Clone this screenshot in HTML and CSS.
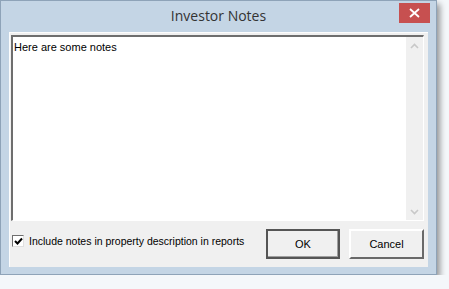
FILE: index.html
```html
<!DOCTYPE html>
<html lang="en">
<head>
    <meta charset="UTF-8">
    <title>Investor Notes</title>
    <link rel="stylesheet" href="styles.css">
</head>
<body>
<div class="window">
    <div class="titlebar">
        <div class="title">Investor Notes</div>
        <div class="close">
            <svg width="11" height="10" viewBox="0 0 11 10">
                <path d="M1 1 L10 9 M10 1 L1 9" stroke="#fff" stroke-width="1.8" fill="none"/>
            </svg>
        </div>
    </div>
    <div class="client">
        <div class="notes">
            <div class="notes-text">Here are some notes</div>
            <div class="scroll">
                <svg width="9" height="6" viewBox="0 0 9 6"><path d="M1 5 L4.5 1.5 L8 5" stroke="#c8c8c8" stroke-width="1.6" fill="none"/></svg>
                <svg width="9" height="6" viewBox="0 0 9 6"><path d="M1 1 L4.5 4.5 L8 1" stroke="#c8c8c8" stroke-width="1.6" fill="none"/></svg>
            </div>
        </div>
        <div class="footer">
            <label class="check">
                <span class="box">
                    <svg width="9" height="9" viewBox="0 0 9 9"><path d="M1 4 L3.5 6.5 L8 1.5" stroke="#000" stroke-width="2" fill="none"/></svg>
                </span>
                Include notes in property description in reports
            </label>
            <div class="buttons">
                <div class="btn btn-default">OK</div>
                <div class="btn">Cancel</div>
            </div>
        </div>
    </div>
</div>
</body>
</html>
```
FILE: styles.css
```css
html, body {
    margin: 0;
    padding: 0;
    background: #f4f7fa;
}

.window {
    width: 435px;
    height: 273px;
    border: 1px solid #8ea3b8;
    background: #c4d5e5;
    box-shadow: 3px 4px 6px rgba(0, 0, 0, 0.4);
    display: flex;
    flex-direction: column;
}

.titlebar {
    height: 31px;
    position: relative;
    display: flex;
    align-items: center;
    justify-content: center;
}

.title {
    font-family: "Open Sans", "Noto Sans", sans-serif;
    font-size: 14px;
    color: #333;
    margin-top: -2px;
}

.close {
    position: absolute;
    right: 6px;
    top: 2px;
    width: 31px;
    height: 20px;
    background: #c75050;
    display: flex;
    align-items: center;
    justify-content: center;
}

.client {
    margin: 0 8px 7px 8px;
    flex: 1;
    background: #f0f0f0;
    border-top: 1px solid #fdfdfd;
    border-left: 1px solid #fdfdfd;
    padding: 2px 4px 0 1px;
    display: flex;
    flex-direction: column;
    font-family: "Liberation Sans", Arial, sans-serif;
    font-size: 10.5px;
    color: #000;
}

.notes {
    height: 183px;
    background: #fff;
    border-top: 2px solid #6e6e6e;
    border-left: 2px solid #6e6e6e;
    border-right: 1px solid #fff;
    border-bottom: 1px solid #fff;
    display: flex;
}

.notes-text {
    flex: 1;
    padding: 4px 1px;
    font-size: 11px;
}

.scroll {
    width: 17px;
    background: #f0f0f0;
    display: flex;
    flex-direction: column;
    justify-content: space-between;
    align-items: center;
    padding: 6px 0 5px 0;
}

.footer {
    display: flex;
    justify-content: space-between;
    align-items: center;
    padding-top: 8px;
}

.check {
    display: flex;
    align-items: center;
    gap: 5px;
    padding-left: 1px;
    margin-top: -6px;
}

.box {
    width: 10px;
    height: 10px;
    background: #fff;
    border-top: 1px solid #6e6e6e;
    border-left: 1px solid #6e6e6e;
    border-right: 1px solid #e0e0e0;
    border-bottom: 1px solid #e0e0e0;
    display: flex;
    align-items: center;
    justify-content: center;
}

.buttons {
    display: flex;
    gap: 9px;
}

.btn {
    width: 71px;
    height: 26px;
    background: #f0f0f0;
    border-top: 2px solid #fff;
    border-left: 2px solid #fff;
    border-right: 2px solid #696969;
    border-bottom: 2px solid #696969;
    display: flex;
    align-items: center;
    justify-content: center;
    font-size: 11px;
}

.btn-default {
    width: 70px;
    border: 2px solid #555;
    box-shadow: inset -1px -1px 0 #a0a0a0;
}
```
